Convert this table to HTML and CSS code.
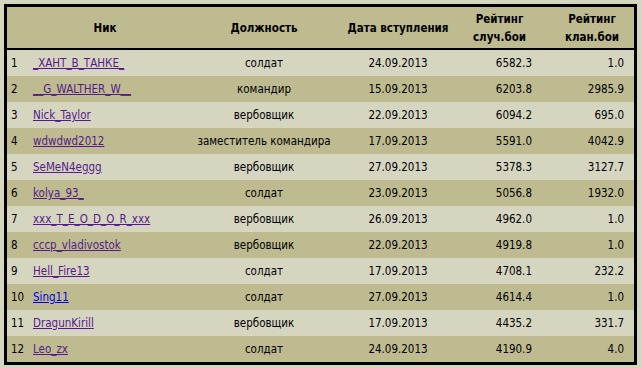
FILE: index.html
```html
<!DOCTYPE html>
<html lang="ru">
<head>
<meta charset="utf-8">
<title>Состав клана</title>
<link rel="stylesheet" href="styles.css">
</head>
<body>
<div class="frame">
<table class="clan">
<colgroup>
<col class="c-num"><col class="c-nick"><col class="c-role"><col class="c-date"><col class="c-r1"><col class="c-r2">
</colgroup>
<thead>
<tr>
<th></th>
<th>Ник</th>
<th>Должность</th>
<th>Дата вступления</th>
<th class="r1">Рейтинг<br>случ.бои</th>
<th class="r2">Рейтинг<br>клан.бои</th>
</tr>
</thead>
<tbody>
<tr class="odd"><td class="num">1</td><td class="nick"><a class="v" href="#">_ХАНТ_В_ТАНКЕ_</a></td><td class="ctr">солдат</td><td class="ctr">24.09.2013</td><td class="r1">6582.3</td><td class="r2">1.0</td></tr>
<tr class="even"><td class="num">2</td><td class="nick"><a class="v" href="#">__G_WALTHER_W__</a></td><td class="ctr">командир</td><td class="ctr">15.09.2013</td><td class="r1">6203.8</td><td class="r2">2985.9</td></tr>
<tr class="odd"><td class="num">3</td><td class="nick"><a class="v" href="#">Nick_Taylor</a></td><td class="ctr">вербовщик</td><td class="ctr">22.09.2013</td><td class="r1">6094.2</td><td class="r2">695.0</td></tr>
<tr class="even"><td class="num">4</td><td class="nick"><a class="v" href="#">wdwdwd2012</a></td><td class="ctr">заместитель командира</td><td class="ctr">17.09.2013</td><td class="r1">5591.0</td><td class="r2">4042.9</td></tr>
<tr class="odd"><td class="num">5</td><td class="nick"><a class="v" href="#">SeMeN4eggg</a></td><td class="ctr">вербовщик</td><td class="ctr">27.09.2013</td><td class="r1">5378.3</td><td class="r2">3127.7</td></tr>
<tr class="even"><td class="num">6</td><td class="nick"><a class="v" href="#">kolya_93_</a></td><td class="ctr">солдат</td><td class="ctr">23.09.2013</td><td class="r1">5056.8</td><td class="r2">1932.0</td></tr>
<tr class="odd"><td class="num">7</td><td class="nick"><a class="v" href="#">xxx_T_E_O_D_O_R_xxx</a></td><td class="ctr">вербовщик</td><td class="ctr">26.09.2013</td><td class="r1">4962.0</td><td class="r2">1.0</td></tr>
<tr class="even"><td class="num">8</td><td class="nick"><a class="v" href="#">cccp_vladivostok</a></td><td class="ctr">вербовщик</td><td class="ctr">22.09.2013</td><td class="r1">4919.8</td><td class="r2">1.0</td></tr>
<tr class="odd"><td class="num">9</td><td class="nick"><a class="v" href="#">Hell_Fire13</a></td><td class="ctr">солдат</td><td class="ctr">17.09.2013</td><td class="r1">4708.1</td><td class="r2">232.2</td></tr>
<tr class="even"><td class="num">10</td><td class="nick"><a class="u" href="#">Sing11</a></td><td class="ctr">солдат</td><td class="ctr">27.09.2013</td><td class="r1">4614.4</td><td class="r2">1.0</td></tr>
<tr class="odd"><td class="num">11</td><td class="nick"><a class="v" href="#">DragunKirill</a></td><td class="ctr">вербовщик</td><td class="ctr">17.09.2013</td><td class="r1">4435.2</td><td class="r2">331.7</td></tr>
<tr class="even"><td class="num">12</td><td class="nick"><a class="v" href="#">Leo_zx</a></td><td class="ctr">солдат</td><td class="ctr">24.09.2013</td><td class="r1">4190.9</td><td class="r2">4.0</td></tr>
</tbody>
</table>
</div>
</body>
</html>
```
FILE: styles.css
```css
html, body {
  margin: 0;
  padding: 0;
  background: #d6d5c0;
}
body {
  font-family: "DejaVu Sans Condensed", "DejaVu Sans", sans-serif;
  font-size: 11.5px;
  color: #000;
  padding: 4px;
}
.frame {
  width: 627px;
  border: 3px solid #000;
  background: #d6d5c0;
}
.clan {
  width: 627px;
  border-collapse: collapse;
  table-layout: fixed;
}
.c-num { width: 22px; }
.c-nick { width: 152px; }
.c-role { width: 166px; }
.c-date { width: 102px; }
.c-r1 { width: 101px; }
.c-r2 { width: 84px; }
thead tr {
  background: #bdbb8f;
  height: 42px;
  border-bottom: 2px solid #000;
}
th {
  font-weight: bold;
  text-align: center;
  padding: 0;
  line-height: 18px;
}
td {
  height: 26px;
  padding: 0;
  white-space: nowrap;
}
tr.odd { background: #d6d5c0; }
tr.even { background: #bdbb8f; }
td.num { padding-left: 4px; }
td.nick { padding-left: 4px; }
td.ctr { text-align: center; }
td.r1 { text-align: right; padding-right: 18px; }
td.r2 { text-align: right; padding-right: 10px; }
a.v { color: #551a8b; }
a.u { color: #0000ee; }
```
